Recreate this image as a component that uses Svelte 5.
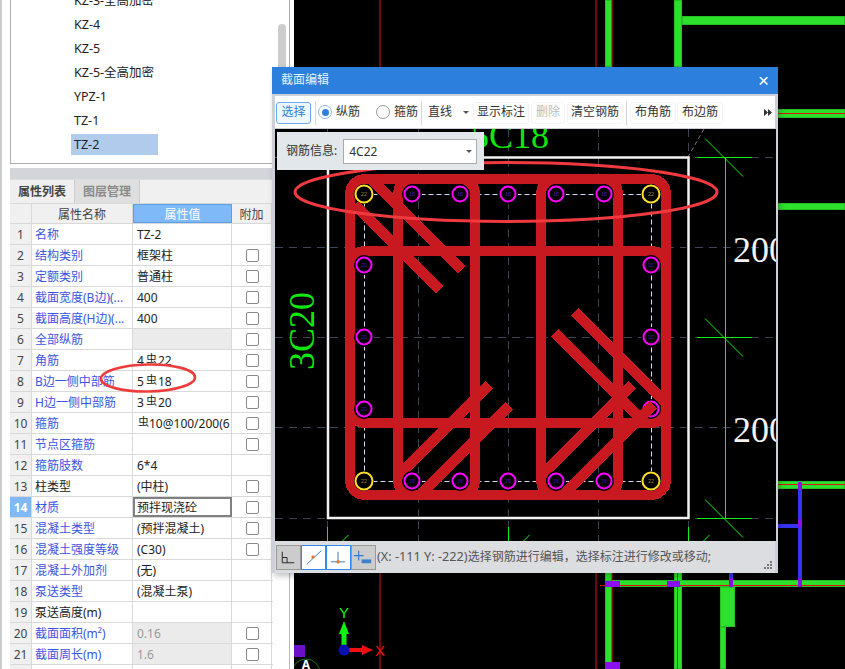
<script>
  const listItems = [
    { t: 'KZ-3-全高加密' }, { t: 'KZ-4' }, { t: 'KZ-5' }, { t: 'KZ-5-全高加密' },
    { t: 'YPZ-1' }, { t: 'TZ-1' }, { t: 'TZ-2', sel: true }
  ];
  const R = '虫';
  const rows = [
    { n: '名称', v: 'TZ-2' },
    { n: '结构类别', v: '框架柱', c: 1 },
    { n: '定额类别', v: '普通柱', c: 1 },
    { n: '截面宽度(B边)(...', v: '400', c: 1 },
    { n: '截面高度(H边)(...', v: '400', c: 1 },
    { n: '全部纵筋', v: '', c: 1, g: 1 },
    { n: '角筋', a: '4', b: '22', c: 1 },
    { n: 'B边一侧中部筋', a: '5', b: '18', c: 1 },
    { n: 'H边一侧中部筋', a: '3', b: '20', c: 1 },
    { n: '箍筋', a: '', b: '10@100/200(6', c: 1 },
    { n: '节点区箍筋', v: '', c: 1 },
    { n: '箍筋肢数', v: '6*4' },
    { n: '柱类型', v: '(中柱)', c: 1, k: 1 },
    { n: '材质', v: '预拌现浇砼', c: 1, act: 1 },
    { n: '混凝土类型', v: '(预拌混凝土)', c: 1 },
    { n: '混凝土强度等级', v: '(C30)', c: 1 },
    { n: '混凝土外加剂', v: '(无)' },
    { n: '泵送类型', v: '(混凝土泵)' },
    { n: '泵送高度(m)', v: '', k: 1 },
    { n: '截面面积(m²)', v: '0.16', c: 1, g: 1, d: 1 },
    { n: '截面周长(m)', v: '1.6', c: 1, g: 1, d: 1 }
  ];

  const walls = [
    [605, 0, 7, 67], [674, 0, 8, 67],
    [682, 16, 163, 9], [778, 109, 67, 9], [778, 203, 67, 7], [778, 481, 67, 8],
    [605, 572, 7, 97], [674, 572, 8, 97],
    [605, 580, 240, 7], [720, 587, 15, 40], [720, 627, 6, 42]
  ];
  const redLines = [
    [380, 0, 380, 67], [380, 572, 380, 669], [596, 0, 596, 67], [612, 0, 612, 67],
    [596, 572, 596, 669], [612, 572, 612, 669], [677.5, 572, 677.5, 669],
    [778, 113.5, 845, 113.5], [778, 484.5, 845, 484.5], [600, 585.5, 845, 585.5]
  ];
  const blues = [[798, 482, 4, 105], [778, 524, 20, 4], [729, 572, 4, 15]];
  const purples = [
    [605, 581, 15, 6], [667, 581, 13, 6], [605, 662, 15, 7], [798, 482, 4, 8],
    [798, 519, 4, 8], [798, 578, 4, 9], [729, 578, 4, 9], [294, 645, 11, 12]
  ];

  const gridV = [327.5, 418.5, 508.5, 598.5, 688.5];
  const gridH = [157.5, 247.5, 337.5, 427.5, 518.5];
  const dimY = [157.5, 337.5, 518.5];

  const hooksUnder = [
    [355, 205, 440, 290], [372, 180, 462, 270],
    [398, 476, 489, 385], [420, 495, 509, 406],
    [575, 312, 666, 403], [555, 333, 645, 423],
    [541, 476, 632, 385]
  ];
  const bars = [
    ...[412, 460, 508, 556, 604].map((x) => ({ x, y: 194, l: '18' })),
    ...[412, 460, 508, 556, 604].map((x) => ({ x, y: 481, l: '18' })),
    ...[265, 337, 409].map((y) => ({ x: 364, y, l: '20' })),
    ...[265, 337, 409].map((y) => ({ x: 651, y, l: '20' })),
    { x: 364, y: 194, l: '22', y2: 1 }, { x: 651, y: 194, l: '22', y2: 1 },
    { x: 364, y: 481, l: '22', y2: 1 }, { x: 651, y: 481, l: '22', y2: 1 }
  ];
</script>

<div class="page">
  <aside class="left">
    <div class="list">
      {#each listItems as it}
        <div class="item"><span class:sel={it.sel}>{it.t}</span></div>
      {/each}
      <div class="thumb"></div>
    </div>
    <div class="props">
      <div class="bar"></div>
      <div class="tabs">
        <div class="tab on">属性列表</div>
        <div class="tab">图层管理</div>
      </div>
      <div class="grid head">
        <div class="cell num"></div>
        <div class="cell hn">属性名称</div>
        <div class="cell hv">属性值</div>
        <div class="cell hn">附加</div>
      </div>
      {#each rows as r, i}
        <div class="grid">
          <div class="cell num" class:numon={r.act}>{i + 1}</div>
          <div class="cell name" class:black={r.k}>{r.n}</div>
          <div class="cell val" class:gray={r.g} class:dim={r.d} class:act={r.act}>
            {#if r.b}
              {r.a}<span class="sym" class:nosp={!r.a}>{R}</span>{r.b}
            {:else}
              {r.v}
            {/if}
          </div>
          <div class="cell add">{#if r.c}<i class="check"></i>{/if}</div>
        </div>
      {/each}
      <div class="grid">
        <div class="cell num"></div>
        <div class="cell name"></div>
        <div class="cell val"></div>
        <div class="cell add"><i class="check"></i></div>
      </div>
      <svg class="mark" viewBox="0 0 110 40" aria-hidden="true">
        <ellipse cx="55" cy="18" rx="47" ry="13.5" transform="rotate(-1 55 18)" fill="none" stroke="#ee3c3c" stroke-width="2.6" />
      </svg>
    </div>
  </aside>

  <main class="canvas">
    <svg class="cad" viewBox="294 0 551 669" aria-hidden="true">
      {#each walls as w}
        <rect x={w[0] + 0.5} y={w[1] + 0.5} width={w[2] - 1} height={w[3] - 1} fill="#2ce02c" stroke="#26bf26" stroke-width="1" />
      {/each}
      {#each redLines as l}
        <line x1={l[0]} y1={l[1]} x2={l[2]} y2={l[3]} stroke="#e01010" stroke-width="1" />
      {/each}
      {#each blues as b}
        <rect x={b[0]} y={b[1]} width={b[2]} height={b[3]} fill="#3434f0" />
      {/each}
      {#each purples as p}
        <rect x={p[0]} y={p[1]} width={p[2]} height={p[3]} fill={p[0] === 294 ? '#6a10c8' : '#8a10f0'} />
      {/each}
      <circle cx="306" cy="673" r="14" fill="none" stroke="#0c7a0c" stroke-width="1" />
      <text x="306" y="669" class="axis-a">A</text>
      <rect x="341.500" y="632" width="5" height="18" fill="#10f010" />
      <polygon points="344,621 339,634 349,634" fill="#10f010" />
      <rect x="349" y="648" width="14" height="4" fill="#f01010" />
      <polygon points="373,650 362,645 362,655" fill="#f01010" />
      <circle cx="344" cy="650" r="5.500" fill="#0a10b0" />
      <text x="344" y="618" class="axis y">Y</text>
      <text x="380" y="656" class="axis x">X</text>
    </svg>

    <section class="dialog">
      <header class="title"><span>截面编辑</span><b>×</b></header>
      <div class="toolbar">
        <button class="select">选择</button>
        <i class="sep"></i>
        <label class="radio"><i class="dot on"></i>纵筋</label>
        <label class="radio second"><i class="dot"></i>箍筋</label>
        <i class="sep s2"></i>
        <div class="combo">直线<i class="caret"></i></div>
        <button class="tool w57">显示标注</button>
        <button class="tool w33 off">删除</button>
        <button class="tool w57">清空钢筋</button>
        <i class="sep s3"></i>
        <button class="tool w46">布角筋</button>
        <button class="tool w46">布边筋</button>
        <svg class="more" viewBox="0 0 8 7" aria-hidden="true"><path d="M0 0l4 3.500L0 7zM4 0l4 3.500L4 7z" fill="#333" /></svg>
      </div>
      <div class="draw">
        <svg class="cad" viewBox="275 129 501 412" aria-hidden="true">
          {#each gridV as x}
            <line x1={x} y1="129" x2={x} y2="541" class="grid-l" />
          {/each}
          {#each gridH as y}
            <line x1="275" y1={y} x2="776" y2={y} class="grid-l" />
          {/each}
          <line x1="688" y1="157" x2="704" y2="129" class="diag-d" />
          <rect x="328" y="157.500" width="360.500" height="360.500" fill="#000" stroke="#f2f2f2" stroke-width="2.500" />
          {#each gridV.slice(1, 4) as x}
            <line x1={x} y1="159" x2={x} y2="516" class="grid-l" />
          {/each}
          {#each gridH.slice(1, 4) as y}
            <line x1="330" y1={y} x2="686" y2={y} class="grid-l" />
          {/each}
          <line x1="725.500" y1="157" x2="725.500" y2="518" class="dim" />
          {#each dimY as y}
            <line x1="697" y1={y} x2="752" y2={y} class="dim" />
            <line x1="705" y1={y - 19} x2="743" y2={y + 19} class="dim" />
          {/each}
          {#each [327.5, 508.5, 688.5] as x}
            <line x1={x} y1="527" x2={x} y2="541" class="dim" />
            <line x1={x + 15} y1="541" x2={x + 21} y2="535" class="dim" />
          {/each}
          <text x="471" y="148" class="big g">5C18</text>
          <text transform="translate(314 370) rotate(-90)" class="big g">3C20</text>
          <text x="733" y="262" class="big w">200</text>
          <text x="733" y="442" class="big w">200</text>
          <rect x="364.500" y="194.500" width="287" height="287" fill="none" stroke="#cfe0f8" stroke-width="1" stroke-dasharray="5 3" />
          <g class="red" shape-rendering="crispEdges">
            <rect x="350" y="179" width="316" height="316" rx="15" />
            <rect x="398" y="179" width="77" height="316" rx="15" />
            <rect x="541" y="179" width="77" height="316" rx="15" />
            <rect x="350" y="251" width="316" height="172" rx="15" />
            {#each hooksUnder as h}
              <line x1={h[0]} y1={h[1]} x2={h[2]} y2={h[3]} />
            {/each}
          </g>
          {#each bars as b}
            <circle cx={b.x} cy={b.y} r="10" fill="#000" />
            <circle cx={b.x} cy={b.y} r={b.y2 ? 8.500 : 7.500} fill="#000" stroke={b.y2 ? '#ffdf2a' : '#ff00ff'} stroke-width="2" />
            <text x={b.x} y={b.y + 2} class="tiny" fill={b.y2 ? '#8f8a28' : '#4a1898'}>{b.l}</text>
          {/each}
          <g class="red" shape-rendering="crispEdges">
            <line x1="563" y1="495" x2="653" y2="405" />
          </g>
          <ellipse cx="506" cy="192" rx="211" ry="29.500" fill="none" stroke="#f03a40" stroke-width="3" />
        </svg>
        <div class="info">
          <span>钢筋信息:</span>
          <div class="sel-box">4C22<i class="caret"></i></div>
        </div>
      </div>
      <footer class="status">
        <div class="icon-btn">
          <svg viewBox="0 0 24 24" aria-hidden="true"><path d="M5.500 6v11.500H18M5.500 12h5v5.500" fill="none" stroke="#222" stroke-width="1" /></svg>
        </div>
        <div class="icon-btn on">
          <svg viewBox="0 0 24 24" aria-hidden="true"><path d="M5 19L20 5" stroke="#3377cc" stroke-width="1" fill="none" /><rect x="10" y="10" width="3" height="3" fill="#ee7722" /></svg>
        </div>
        <div class="icon-btn on">
          <svg viewBox="0 0 24 24" aria-hidden="true"><path d="M11.500 6v12M4 16.500h15" stroke="#3377cc" stroke-width="1" fill="none" /><rect x="10" y="15" width="3" height="3" fill="#ee7722" /></svg>
        </div>
        <div class="icon-btn">
          <svg viewBox="0 0 24 24" aria-hidden="true"><path d="M7 5v10M2 10h10" stroke="#3377cc" stroke-width="1.200" fill="none" /><rect x="10" y="14" width="10" height="4" fill="#3f7fd0" /></svg>
        </div>
        <span class="msg"><span class="xy">(X: -111 Y: -222)</span>选择钢筋进行编辑，选择标注进行修改或移动;</span>
        <svg class="grip" viewBox="0 0 9 8" aria-hidden="true"><path d="M6 0h2v2H6zM3 3h2v2H3zM6 3h2v2H6zM0 6h2v2H0zM3 6h2v2H3zM6 6h2v2H6z" fill="#777" /></svg>
      </footer>
    </section>
  </main>
</div>

<style>
  :global(body) { margin: 0; background: #fff; }
  .page {
    position: relative; display: flex; width: 845px; height: 669px; overflow: hidden;
    font: 12px/1.2 "Noto Sans", "Noto Sans CJK SC", sans-serif; color: #222;
  }
  .left {
    box-sizing: border-box; width: 294px; height: 669px; flex: none; display: flex; flex-direction: column;
    padding: 0 4px 0 8px; border-left: 2px solid #ccc; background: #fff;
  }
  .list {
    position: relative; box-sizing: border-box; height: 164px; flex: none; overflow: hidden;
    border: 1px solid #aeaeae; border-top: 0; padding-left: 60px;
  }
  .item { height: 24px; font-size: 12.500px; }
  .item:first-child { margin-top: -10px; }
  .item span { display: inline-block; box-sizing: border-box; height: 21px; line-height: 21px; padding-left: 3px; }
  .item span.sel { width: 87px; background: #b0cbec; }
  .thumb { position: absolute; left: 267px; top: 24px; width: 8px; height: 150px; border-radius: 4px; background: #cdcdcd; }
  .props { position: relative; flex: 1; margin-top: 4px; border-right: 1px solid #bbb; padding-right: 16px; overflow: hidden; }
  .bar { height: 11px; background: #d3d5da; }
  .tabs { display: flex; height: 24px; background: #f0f0f0; border-top: 1px solid #ddd; box-sizing: border-box; }
  .tab {
    box-sizing: border-box; width: 65px; line-height: 23px; text-align: center; font-weight: 700;
    color: #8a8a8a; background: #dfdfdf; border-right: 1px solid #ccc;
  }
  .tab.on { background: #efefef; color: #444; }
  .grid { display: grid; grid-template-columns: 22px 101px 99px 40px; height: 21px; border-bottom: 1px solid #d9d9d9; box-sizing: border-box; }
  .head { background: #f0f0f0; border-top: 1px solid #d9d9d9; }
  .cell { box-sizing: border-box; border-right: 1px solid #d9d9d9; line-height: 22px; white-space: nowrap; overflow: hidden; min-width: 0; }
  .num { background: #f0f0f0; text-align: center; color: #444; }
  .numon { background: #7fb9f7; color: #fff; font-weight: 700; }
  .hn { text-align: center; color: #444; }
  .hv { text-align: center; color: #fff; background: #7fb9f7; border: 1px solid #5a9fe8; line-height: 20px; }
  .name { color: #3a55e0; padding-left: 3px; }
  .name.black { color: #222; }
  .val { padding-left: 4px; color: #222; }
  .val.gray { background: #ebebeb; }
  .val.dim { color: #999; }
  .val.act { border: 2px solid #808080; padding-left: 2px; line-height: 18px; }
  .sym { font-size: 11px; position: relative; top: -2px; margin: 0 1px 0 2px; }
  .sym.nosp { margin-left: 1px; margin-right: 0; }
  .add { display: flex; align-items: center; justify-content: center; padding-left: 2px; }
  .check { width: 13px; height: 13px; box-sizing: border-box; border: 1px solid #8a8a8a; border-radius: 2px; background: #fff; }
  .mark { position: absolute; left: 83px; top: 192px; width: 110px; height: 40px; }

  .canvas { flex: 1; background: #000; height: 669px; }
  .cad { display: block; width: 100%; height: 100%; }
  .canvas > .cad { width: 551px; height: 669px; }
  .axis-a { fill: #fff; font-size: 12px; text-anchor: middle; font-weight: 700; }
  .axis { font-size: 15px; text-anchor: middle; font-family: "Liberation Sans", sans-serif; }
  .axis.y { fill: #10f010; }
  .axis.x { fill: #f01010; }

  .dialog {
    position: absolute; left: 272px; top: 67px; width: 506px; height: 506px; display: flex; flex-direction: column;
    box-sizing: border-box; background: #cdd0d6; box-shadow: 2px 3px 6px rgba(0,0,0,.25); overflow: hidden;
  }
  .title {
    height: 27px; flex: none; background: #2d7fdd; color: #e8f1fb; display: flex; align-items: center;
    justify-content: space-between; padding: 0 9px 0 9px; font-size: 12px;
  }
  .title b { font: 400 19px/1 "Liberation Sans", sans-serif; color: #fff; }
  .toolbar {
    height: 32px; flex: none; box-sizing: border-box; margin: 2px 3px 1px 3px; padding: 1px 0 0 1px; background: #fff;
    display: flex; align-items: center; white-space: nowrap;
  }
  button { font: inherit; padding: 0; cursor: default; }
  .select {
    box-sizing: border-box; width: 35px; height: 22px; border: 1px solid #6aa9ee; border-radius: 3px;
    background: #f0f7ff; color: #2d7fdd;
  }
  .sep { width: 1px; height: 24px; background: #d5d5d5; margin: 0 2px 0 4px; flex: none; }
  .radio { display: flex; align-items: center; gap: 4px; color: #333; }
  .radio.second { margin-left: 16px; }
  .dot { position: relative; box-sizing: border-box; width: 14px; height: 14px; border: 1px solid #999; border-radius: 50%; background: #fff; }
  .dot.on { border-color: #8fb8e8; }
  .dot.on::after { content: ""; position: absolute; left: 2.500px; top: 2.500px; width: 7px; height: 7px; border-radius: 50%; background: #2d7fdd; }
  .s2 { margin: 0 3px 0 3px; }
  .s3 { margin: 0 3px 0 2px; }
  .combo { box-sizing: border-box; position: relative; width: 48px; padding-left: 3px; color: #333; }
  .caret { position: absolute; right: 4px; top: 50%; margin-top: -1px; border: 3px solid transparent; border-top: 3px solid #555; border-bottom: 0; }
  .tool { box-sizing: border-box; height: 22px; background: #fff; border: 1px solid #f4f4f4; border-radius: 3px; color: #333; margin-right: 1px; }
  .w57 { width: 56px; }
  .w33 { width: 34px; margin: 0 2px 0 1px; }
  .w46 { width: 46px; margin-right: 1px; }
  .tool.off { color: #bbb; }
  .more { margin-left: auto; margin-right: 3px; width: 8px; height: 7px; }

  .draw { position: relative; height: 412px; flex: none; margin: 0 2px 0 3px; background: #000; overflow: hidden; }
  .grid-l { stroke: #3c4558; stroke-width: 1; stroke-dasharray: 8 6; }
  .diag-d { stroke: #777; stroke-width: 1; stroke-dasharray: 4 3; }
  .dim { stroke: #12f012; stroke-width: 1; }
  .big { font: 36px "Liberation Serif", serif; }
  .big.g { fill: #0fe80f; }
  .big.w { fill: #f4f4f4; }
  .red rect { fill: none; stroke: #c81820; stroke-width: 10; }
  .red line { stroke: #c81820; stroke-width: 10; }
  .tiny { font: 5.500px "Liberation Sans", sans-serif; text-anchor: middle; }
  .info {
    position: absolute; left: 2px; top: 3px; width: 207px; height: 38px; box-sizing: border-box; background: #e1e7ea;
    display: flex; align-items: center; padding-left: 9px; gap: 6px; color: #333;
  }
  .sel-box {
    position: relative; box-sizing: border-box; width: 134px; height: 25px; line-height: 24px; padding-left: 5px;
    background: #fff; border: 1px solid #aaa; color: #333;
  }
  .status { position: relative; flex: 1; display: flex; align-items: center; padding-left: 1px; margin: 0 3px 0 3px; background: #dcdde0; }
  .icon-btn { box-sizing: border-box; width: 25px; height: 25px; background: #ccc; border: 1px solid #999; }
  .icon-btn svg { display: block; width: 23px; height: 23px; }
  .icon-btn.on { background: #fff; border-color: #2d8cf0; }
  .msg { margin-left: 1px; color: #555; white-space: nowrap; }
  .xy { font-size: 12.700px; }
  .grip { position: absolute; right: 2px; bottom: 4px; width: 9px; height: 8px; }
</style>
